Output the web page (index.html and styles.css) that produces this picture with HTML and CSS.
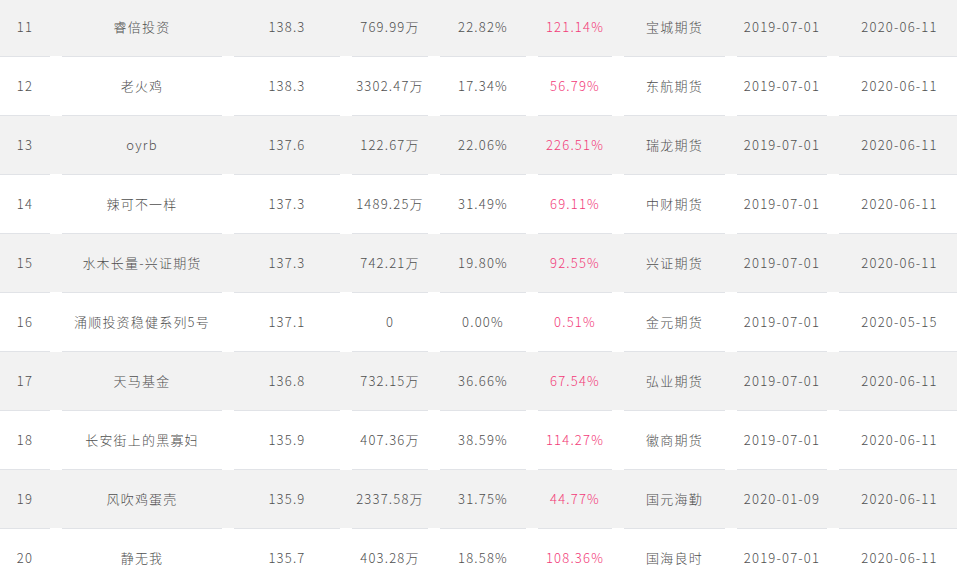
FILE: index.html
```html
<!DOCTYPE html>
<html lang="zh-CN">
<head>
<meta charset="utf-8">
<title>排行榜</title>
<link rel="stylesheet" href="styles.css">
</head>
<body>
<div class="table">
  <div class="row alt"><div class="c">11</div><div class="c">睿倍投资</div><div class="c">138.3</div><div class="c">769.99万</div><div class="c">22.82%</div><div class="c pink">121.14%</div><div class="c">宝城期货</div><div class="c">2019-07-01</div><div class="c">2020-06-11</div></div>
  <div class="row"><div class="c">12</div><div class="c">老火鸡</div><div class="c">138.3</div><div class="c">3302.47万</div><div class="c">17.34%</div><div class="c pink">56.79%</div><div class="c">东航期货</div><div class="c">2019-07-01</div><div class="c">2020-06-11</div></div>
  <div class="row alt"><div class="c">13</div><div class="c">oyrb</div><div class="c">137.6</div><div class="c">122.67万</div><div class="c">22.06%</div><div class="c pink">226.51%</div><div class="c">瑞龙期货</div><div class="c">2019-07-01</div><div class="c">2020-06-11</div></div>
  <div class="row"><div class="c">14</div><div class="c">辣可不一样</div><div class="c">137.3</div><div class="c">1489.25万</div><div class="c">31.49%</div><div class="c pink">69.11%</div><div class="c">中财期货</div><div class="c">2019-07-01</div><div class="c">2020-06-11</div></div>
  <div class="row alt"><div class="c">15</div><div class="c">水木长量-兴证期货</div><div class="c">137.3</div><div class="c">742.21万</div><div class="c">19.80%</div><div class="c pink">92.55%</div><div class="c">兴证期货</div><div class="c">2019-07-01</div><div class="c">2020-06-11</div></div>
  <div class="row"><div class="c">16</div><div class="c">涌顺投资稳健系列5号</div><div class="c">137.1</div><div class="c">0</div><div class="c">0.00%</div><div class="c pink">0.51%</div><div class="c">金元期货</div><div class="c">2019-07-01</div><div class="c">2020-05-15</div></div>
  <div class="row alt"><div class="c">17</div><div class="c">天马基金</div><div class="c">136.8</div><div class="c">732.15万</div><div class="c">36.66%</div><div class="c pink">67.54%</div><div class="c">弘业期货</div><div class="c">2019-07-01</div><div class="c">2020-06-11</div></div>
  <div class="row"><div class="c">18</div><div class="c">长安街上的黑寡妇</div><div class="c">135.9</div><div class="c">407.36万</div><div class="c">38.59%</div><div class="c pink">114.27%</div><div class="c">徽商期货</div><div class="c">2019-07-01</div><div class="c">2020-06-11</div></div>
  <div class="row alt"><div class="c">19</div><div class="c">风吹鸡蛋壳</div><div class="c">135.9</div><div class="c">2337.58万</div><div class="c">31.75%</div><div class="c pink">44.77%</div><div class="c">国元海勤</div><div class="c">2020-01-09</div><div class="c">2020-06-11</div></div>
  <div class="row"><div class="c">20</div><div class="c">静无我</div><div class="c">135.7</div><div class="c">403.28万</div><div class="c">18.58%</div><div class="c pink">108.36%</div><div class="c">国海良时</div><div class="c">2019-07-01</div><div class="c">2020-06-11</div></div>
</div>
</body>
</html>
```
FILE: styles.css
```css
html, body {
  margin: 0;
  padding: 0;
  background: #fff;
}
body {
  font-family: "Noto Sans CJK SC", "Microsoft YaHei", sans-serif;
  font-size: 13px;
  font-weight: 300;
  color: #4f4f4f;
  letter-spacing: 1.2px;
  overflow: hidden;
}
.table {
  margin-top: -2px;
  width: 960px;
}
.row {
  display: grid;
  grid-template-columns: 50px 160px 106px 76px 86px 74px 101px 90px 1fr;
  column-gap: 12px;
  height: 59px;
}
.row.alt {
  background: linear-gradient(#f2f2f2, #f2f2f2) no-repeat;
  background-size: 100% calc(100% - 1px);
}
.c {
  display: flex;
  align-items: center;
  justify-content: center;
  white-space: nowrap;
  padding-bottom: 2px;
  border-bottom: 1px solid #e1e3e7;
}
.pink {
  color: #f23a78;
}
```
